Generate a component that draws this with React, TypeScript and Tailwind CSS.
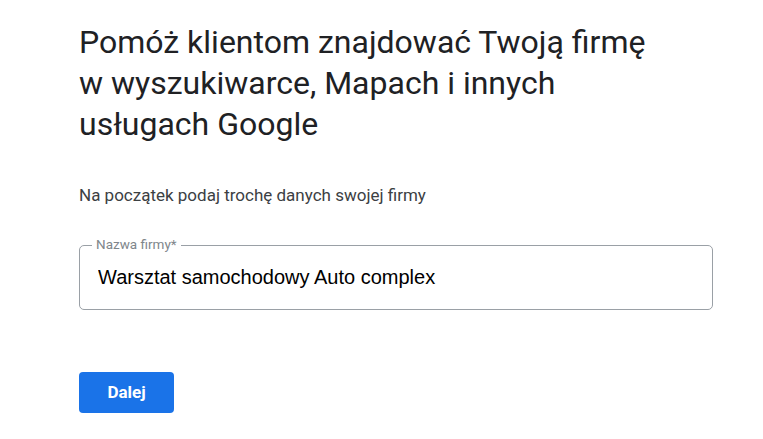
import React, { useState } from "react";

function App() {
  const [name, setName] = useState("Warsztat samochodowy Auto complex");

  return (
    <div className="min-h-screen w-full bg-white font-['Roboto','Liberation_Sans',sans-serif]">
      <div className="pl-[79px] pt-[22px] w-[713px]">
        <h1 className="text-[32px] leading-[41px] text-[#202124] font-normal">
          Pomóż klientom znajdować Twoją firmę
          <br />
          w wyszukiwarce, Mapach i innych
          <br />
          usługach Google
        </h1>

        <p className="mt-[38px] text-[17px] leading-[25px] text-[#3c4043]">
          Na początek podaj trochę danych swojej firmy
        </p>

        {/* Name field */}
        <div className="relative mt-[37px]">
          <label className="absolute -top-[9px] left-[13px] bg-white px-[4px] text-[13.5px] leading-[16px] text-[#80868b]">
            Nazwa firmy*
          </label>
          <input
            value={name}
            onChange={(e) => setName(e.target.value)}
            className="w-full h-[65px] rounded-[5px] border border-[#9aa0a6] px-[18px] text-[20px] text-black outline-none font-['Liberation_Sans',Arial,sans-serif]"
          />
        </div>

        <button className="mt-[62px] w-[95px] h-[41px] rounded-[4px] bg-[#1a73e8] text-white text-[17px] font-bold">
          Dalej
        </button>
      </div>
    </div>
  );
}

export default App;
